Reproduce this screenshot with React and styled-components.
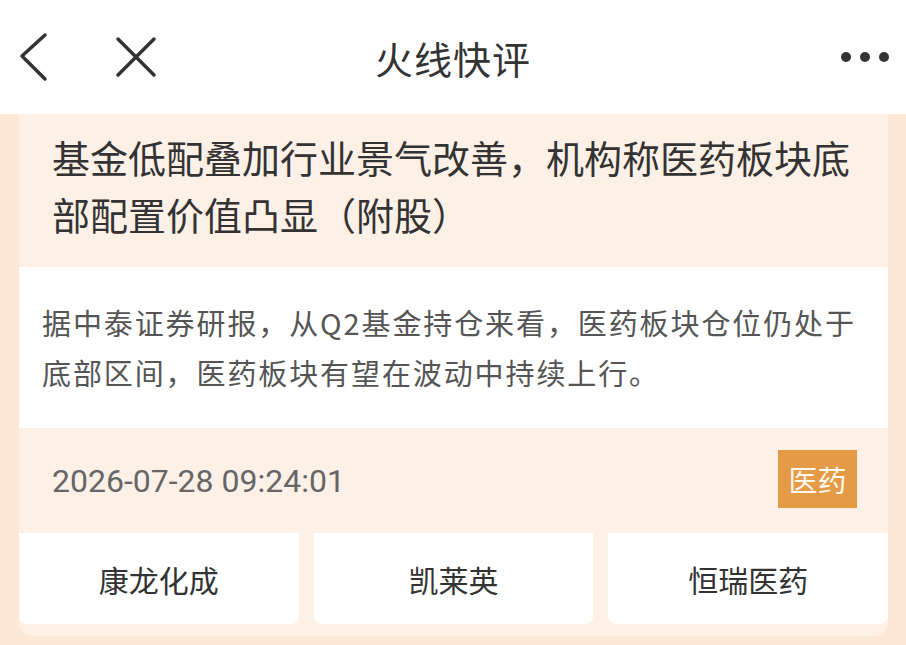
import React from "react"
import styled, { createGlobalStyle } from "styled-components"

const GlobalStyle = createGlobalStyle`
  html, body {
    margin: 0;
    padding: 0;
    background: #fde8d5;
    font-family: "Noto Sans CJK SC", "Noto Sans", sans-serif;
  }
`

const Page = styled.div`
  width: 906px;
  min-height: 645px;
  display: flex;
  flex-direction: column;
`

const Header = styled.header`
  height: 114px;
  background: #fff;
  display: grid;
  grid-template-columns: 200px 1fr 200px;
  align-items: center;
`

const NavLeft = styled.div`
  display: flex;
  align-items: center;
  gap: 63px;
  padding-left: 16px;
`

const NavRight = styled.div`
  display: flex;
  justify-content: flex-end;
  padding-right: 16px;
`

const IconButton = styled.button`
  border: 0;
  background: none;
  padding: 0;
  display: flex;
  color: #333;
`

const HeaderTitle = styled.h1`
  margin: 0;
  text-align: center;
  font-size: 38px;
  font-weight: 400;
  color: #333;
  letter-spacing: 1px;
`

const Body = styled.main`
  padding: 0 18px 10px 19px;
`

const Card = styled.article`
  background: #fdf0e6;
  border-radius: 0 0 14px 14px;
  overflow: hidden;
  padding-bottom: 12px;
`

const Title = styled.h2`
  margin: 0;
  padding: 14px 24px 25px 33px;
  font-size: 38px;
  line-height: 57px;
  font-weight: 400;
  color: #333;
`

const Summary = styled.p`
  margin: 0;
  background: #fff;
  padding: 30px 22px 31px 23px;
  font-size: 29px;
  letter-spacing: 1.9px;
  line-height: 50px;
  color: #555;
`

const MetaRow = styled.div`
  height: 105px;
  display: flex;
  align-items: center;
  justify-content: space-between;
  padding: 0 31px 0 33px;
`

const Time = styled.span`
  font-family: "Roboto", "Noto Sans CJK SC", sans-serif;
  font-size: 32px;
  color: #666;
`

const Tag = styled.span`
  width: 79px;
  height: 58px;
  margin-top: -4px;
  display: flex;
  align-items: center;
  justify-content: center;
  background: #e59a45;
  color: #fff8ee;
  font-size: 29px;
`

const Stocks = styled.div`
  display: grid;
  grid-template-columns: repeat(3, 1fr);
  gap: 15px;
`

const Stock = styled.button`
  height: 91px;
  border: 0;
  border-radius: 0 0 8px 8px;
  background: #fff;
  font-family: inherit;
  font-size: 30px;
  color: #333;
`

const BackIcon = () => (
  <svg width="36" height="56" viewBox="0 0 36 56">
    <polyline points="29,6 6,27 29,50" fill="none" stroke="currentColor" strokeWidth="3.5" strokeLinecap="round" strokeLinejoin="round" />
  </svg>
)

const CloseIcon = () => (
  <svg width="42" height="42" viewBox="0 0 42 42">
    <path d="M3 3 L39 39 M39 3 L3 39" fill="none" stroke="currentColor" strokeWidth="3.5" strokeLinecap="round" />
  </svg>
)

const MoreIcon = () => (
  <svg width="50" height="12" viewBox="0 0 50 12">
    <circle cx="6" cy="6" r="5" fill="currentColor" />
    <circle cx="25" cy="6" r="5" fill="currentColor" />
    <circle cx="44" cy="6" r="5" fill="currentColor" />
  </svg>
)

const stocks = ["康龙化成", "凯莱英", "恒瑞医药"]

export default function App() {
  return (
    <Page>
      <GlobalStyle />
      <Header>
        <NavLeft>
          <IconButton><BackIcon /></IconButton>
          <IconButton><CloseIcon /></IconButton>
        </NavLeft>
        <HeaderTitle>火线快评</HeaderTitle>
        <NavRight>
          <IconButton><MoreIcon /></IconButton>
        </NavRight>
      </Header>
      <Body>
        <Card>
          <Title>基金低配叠加行业景气改善，机构称医药板块底部配置价值凸显（附股）</Title>
          <Summary>据中泰证券研报，从Q2基金持仓来看，医药板块仓位仍处于底部区间，医药板块有望在波动中持续上行。</Summary>
          <MetaRow>
            <Time>2026-07-28 09:24:01</Time>
            <Tag>医药</Tag>
          </MetaRow>
          <Stocks>
            {stocks.map(name => (
              <Stock key={name}>{name}</Stock>
            ))}
          </Stocks>
        </Card>
      </Body>
    </Page>
  )
}
